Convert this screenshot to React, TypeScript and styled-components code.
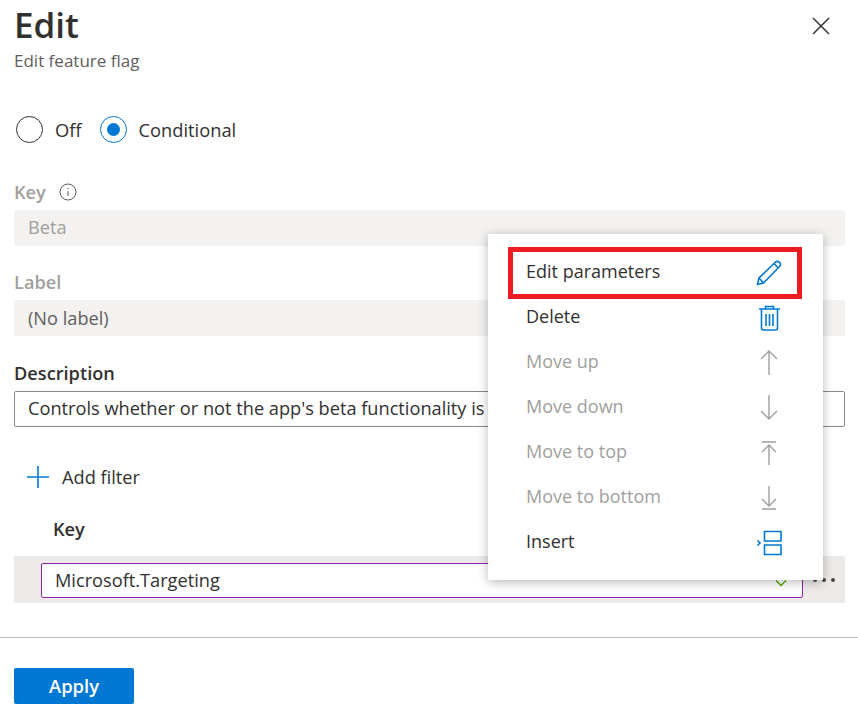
import React from 'react'
import styled, { createGlobalStyle } from 'styled-components'

const Global = createGlobalStyle`
  html, body { margin: 0; padding: 0; background: #fff; }
  body { font-family: "Open Sans", "Noto Sans", sans-serif; color: #323130; }
`

const Page = styled.div`
  position: relative;
  width: 858px;
  height: 714px;
  overflow: hidden;
  background: #fff;
`
const Content = styled.div`
  display: flex;
  flex-direction: column;
  padding: 0 13px 0 14px;
`
const Header = styled.div`
  display: flex;
  justify-content: space-between;
  height: 72px;
`
const Title = styled.h1`
  margin: 0;
  font-size: 35px;
  line-height: 50px;
  font-weight: 600;
  color: #323130;
`
const Subtitle = styled.div`
  font-size: 17px;
  line-height: 22px;
  color: #605e5c;
`
const CloseButton = styled.button`
  width: 20px;
  height: 20px;
  margin: 16px 14px 0 0;
  padding: 0;
  border: 0;
  background: none;
  color: #323130;
`
const RadioRow = styled.div`
  display: flex;
  align-items: center;
  height: 28px;
  margin-top: 43px;
  margin-left: 2px;
`
const RadioOption = styled.label`
  display: flex;
  align-items: center;
  gap: 12px;
  margin-right: 18px;
  font-size: 18.3px;
  color: #323130;
`
const RadioCircle = styled.span<{ $on?: boolean }>`
  display: flex;
  align-items: center;
  justify-content: center;
  box-sizing: border-box;
  width: 27px;
  height: 27px;
  border-radius: 50%;
  border: 1px solid ${p => (p.$on ? '#0078d4' : '#323130')};
  &::after {
    content: '';
    display: ${p => (p.$on ? 'block' : 'none')};
    width: 13px;
    height: 13px;
    border-radius: 50%;
    background: #0078d4;
  }
`
const Label = styled.div<{ $off?: boolean; $top: number }>`
  display: flex;
  align-items: center;
  gap: 13px;
  height: 24px;
  margin-top: ${p => p.$top}px;
  font-size: 18.2px;
  font-weight: 600;
  color: ${p => (p.$off ? '#a19f9d' : '#323130')};
`
const InfoIcon = styled.span`
  display: flex;
  color: #605e5c;
`
const Field = styled.div<{ $off?: boolean; $muted?: boolean }>`
  box-sizing: border-box;
  height: 36px;
  margin-top: 6px;
  padding: 0 13px;
  border-radius: 2px;
  white-space: nowrap;
  overflow: hidden;
  font-size: 18.2px;
  line-height: ${p => (p.$muted ? 34 : 33)}px;
  background: ${p => (p.$off ? '#f3f2f1' : '#fff')};
  border: 1px solid ${p => (p.$off ? '#f3f2f1' : '#8a8886')};
  color: ${p => (p.$off ? (p.$muted ? '#605e5c' : '#a19f9d') : '#323130')};
`
const AddFilter = styled.div`
  display: flex;
  align-items: center;
  gap: 12px;
  height: 28px;
  margin-top: 36px;
  margin-left: 12px;
  font-size: 18.2px;
  color: #323130;
`
const ColumnHead = styled.div`
  height: 24px;
  margin-top: 26px;
  margin-left: 39px;
  font-size: 18.2px;
  font-weight: 600;
  color: #323130;
`
const FilterRow = styled.div`
  display: flex;
  align-items: center;
  height: 47px;
  margin-top: 15px;
  background: #edebe9;
`
const FilterSelect = styled.div`
  box-sizing: border-box;
  display: flex;
  align-items: center;
  justify-content: space-between;
  width: 762px;
  height: 35px;
  margin: 2px 0 0 27px;
  padding: 0 15px 2px 13px;
  border: 1px solid #8e24aa;
  border-radius: 2px;
  background: #fff;
  font-size: 18.2px;
`
const Chevron = styled.svg`
  margin-top: 6px;
  color: #57a300;
`
const MoreDots = styled.div`
  display: flex;
  gap: 5px;
  margin-left: 10px;
`
const Dot = styled.span`
  width: 4px;
  height: 4px;
  border-radius: 50%;
  background: #484644;
`
const Footer = styled.div`
  margin-top: 34px;
  border-top: 1px solid #bdbdbd;
  padding: 30px 14px 0;
`
const ApplyButton = styled.button`
  display: block;
  width: 120px;
  height: 36px;
  padding: 0 0 2px;
  border: 0;
  border-radius: 2px;
  background: #0078d4;
  color: #fff;
  font-family: inherit;
  font-size: 18.4px;
  font-weight: 600;
`
const Menu = styled.div`
  position: absolute;
  left: 488px;
  top: 234px;
  box-sizing: border-box;
  width: 335px;
  height: 346px;
  padding-top: 14px;
  background: #fff;
  box-shadow: 0 2px 10px rgba(0, 0, 0, 0.28);
`
const MenuItem = styled.div<{ $off?: boolean }>`
  display: flex;
  align-items: center;
  justify-content: space-between;
  height: 45px;
  padding: 0 41px 0 38px;
  font-size: 18px;
  color: ${p => (p.$off ? '#a19f9d' : '#323130')};
`
const MenuIcon = styled.svg<{ $off?: boolean }>`
  width: 26px;
  height: 28px;
  margin-top: 2px;
  fill: none;
  stroke: ${p => (p.$off ? '#a19f9d' : '#0078d4')};
  stroke-width: ${p => (p.$off ? 1.4 : 1.6)};
`
const Highlight = styled.div`
  position: absolute;
  left: 508px;
  top: 247px;
  box-sizing: border-box;
  width: 294px;
  height: 52px;
  border: 5px solid #ed1c24;
`
const FocusEdge = styled.div`
  position: absolute;
  left: 822px;
  top: 250px;
  height: 47px;
  border-left: 1px dotted #00b7f0;
`

const items = [
  { name: 'Edit parameters', path: 'M1.5 26.5 L3 20 L19.5 4 Q21.5 2.5 23.5 4.3 Q25.5 6.5 23.5 8.5 L7.5 25 Z M3 20 L7.5 25 M18 5.5 L22.5 10', off: false },
  { name: 'Delete', path: 'M3 6 H24 M9.5 6 V3.5 H17.5 V6 M5.5 6 V25 Q5.5 27 7.5 27 H19.5 Q21.5 27 21.5 25 V6 M10 11 V23 M13.5 11 V23 M17 11 V23', off: false },
  { name: 'Move up', path: 'M13 27 V3 M5 11 L13 3 L21 11', off: true },
  { name: 'Move down', path: 'M13 2 V26 M5 18 L13 26 L21 18', off: true },
  { name: 'Move to top', path: 'M6 4 H20 M13 27 V7 M6 14 L13 7 L20 14', off: true },
  { name: 'Move to bottom', path: 'M13 3 V23 M6 16 L13 23 L20 16 M6 26 H20', off: true },
  { name: 'Insert', path: 'M8.5 3.5 H25 V13 H8.5 Z M8.5 17 H25 V26.5 H8.5 Z M1.5 12.5 L4 15 L1.5 17.5', off: false },
]

export default function App() {
  return (
    <Page>
      <Global />
      <Content>
        <Header>
          <div>
            <Title>Edit</Title>
            <Subtitle>Edit feature flag</Subtitle>
          </div>
          <CloseButton aria-label="Close">
            <svg width="20" height="20" viewBox="0 0 20 20" fill="none" stroke="currentColor" strokeWidth="1.5">
              <path d="M2 2 L18 18 M18 2 L2 18" />
            </svg>
          </CloseButton>
        </Header>
        <RadioRow>
          <RadioOption><RadioCircle />Off</RadioOption>
          <RadioOption><RadioCircle $on />Conditional</RadioOption>
        </RadioRow>
        <Label $off $top={37}>
          Key
          <InfoIcon>
            <svg width="18" height="18" viewBox="0 0 18 18" fill="none" stroke="currentColor" strokeWidth="1">
              <circle cx="9" cy="9" r="8" />
              <path d="M9 8 V13 M9 5 V6.3" />
            </svg>
          </InfoIcon>
        </Label>
        <Field $off>Beta</Field>
        <Label $off $top={24}>Label</Label>
        <Field $off $muted>(No label)</Field>
        <Label $top={25}>Description</Label>
        <Field>Controls whether or not the app's beta functionality is</Field>
        <AddFilter>
          <svg width="24" height="24" viewBox="0 0 24 24" fill="none" stroke="#0078d4" strokeWidth="1.6">
            <path d="M12 1 V23 M1 12 H23" />
          </svg>
          Add filter
        </AddFilter>
        <ColumnHead>Key</ColumnHead>
        <FilterRow>
          <FilterSelect>
            Microsoft.Targeting
            <Chevron width="12" height="8" viewBox="0 0 12 8" fill="none" stroke="currentColor" strokeWidth="1.3">
              <path d="M1 1.5 L6 6.5 L11 1.5" />
            </Chevron>
          </FilterSelect>
          <MoreDots><Dot /><Dot /><Dot /></MoreDots>
        </FilterRow>
      </Content>
      <Footer>
        <ApplyButton>Apply</ApplyButton>
      </Footer>
      <FocusEdge />
      <Menu>
        {items.map(item => (
          <MenuItem key={item.name} $off={item.off}>
            {item.name}
            <MenuIcon $off={item.off} viewBox="0 0 26 28">
              <path d={item.path} />
            </MenuIcon>
          </MenuItem>
        ))}
      </Menu>
      <Highlight />
    </Page>
  )
}
